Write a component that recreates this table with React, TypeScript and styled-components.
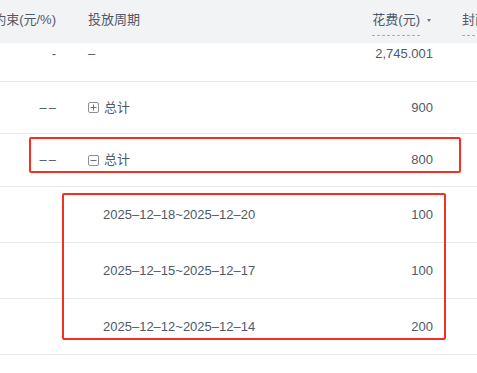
import React from 'react';
import styled, { createGlobalStyle } from 'styled-components';

const GlobalStyle = createGlobalStyle`
  html, body {
    margin: 0;
    padding: 0;
    background: #ffffff;
    overflow: hidden;
  }
  body {
    font-family: "Liberation Sans", "Noto Sans CJK SC", sans-serif;
    font-size: 13px;
    color: #4e5969;
  }
`;

const Page = styled.div`
  position: relative;
  width: 477px;
  height: 373px;
  overflow: hidden;
`;

const Table = styled.div`
  display: flex;
  flex-direction: column;
  width: 649px;
`;

const Row = styled.div<{ $height: number; $head?: boolean; $top?: boolean }>`
  display: grid;
  grid-template-columns: 72px 217px 160px 200px;
  height: ${(p) => p.$height}px;
  box-sizing: border-box;
  align-items: ${(p) => (p.$top ? 'start' : 'center')};
  background: ${(p) => (p.$head ? '#f2f3f5' : '#ffffff')};
  border-bottom: ${(p) => (p.$head ? 'none' : '1px solid #e8e9ed')};
  line-height: 22px;
`;

const Cell = styled.div<{ $align?: 'left' | 'right'; $indent?: number }>`
  display: flex;
  align-items: center;
  justify-content: ${(p) => (p.$align === 'right' ? 'flex-end' : 'flex-start')};
  padding: 0 16px 0 ${(p) => 16 + (p.$indent || 0)}px;
  white-space: nowrap;
  overflow: hidden;
  color: #4e5969;
`;

const HeadCell = styled(Cell)`
  align-self: start;
  padding-top: 9px;
  color: #4e5969;
`;

const Dashed = styled.span`
  border-bottom: 1px dashed #a9aeb8;
  line-height: 22px;
  padding-bottom: 4px;
`;

const Caret = styled.span`
  align-self: flex-start;
  width: 0;
  height: 0;
  margin: 10px 2px 0 7px;
  border-left: 2.5px solid transparent;
  border-right: 2.5px solid transparent;
  border-top: 3px solid #6b7280;
`;

const Dashes = styled.span`
  letter-spacing: 2px;
  margin-right: -2px;
`;

const Toggle = styled.span`
  display: inline-flex;
  align-items: center;
  justify-content: center;
  width: 11px;
  height: 11px;
  margin-right: 5px;
  box-sizing: border-box;
  border: 1px solid #8a8f99;
  border-radius: 2px;
`;

const Mark = styled.svg`
  display: block;
`;

const Highlight = styled.div<{ $x: number; $y: number; $w: number; $h: number }>`
  position: absolute;
  left: ${(p) => p.$x}px;
  top: ${(p) => p.$y}px;
  width: ${(p) => p.$w}px;
  height: ${(p) => p.$h}px;
  box-sizing: border-box;
  border: 2.5px solid #f5301c;
  border-radius: 2px;
  pointer-events: none;
`;

const ToggleIcon = ({ open }: { open: boolean }) => (
  <Toggle>
    <Mark width="7" height="7" viewBox="0 0 7 7">
      <line x1="0.5" y1="3.5" x2="6.5" y2="3.5" stroke="#6b707a" strokeWidth="1" />
      {!open && <line x1="3.5" y1="0.5" x2="3.5" y2="6.5" stroke="#6b707a" strokeWidth="1" />}
    </Mark>
  </Toggle>
);

const periods = [
  { range: '2025–12–18~2025–12–20', cost: '100' },
  { range: '2025–12–15~2025–12–17', cost: '100' },
  { range: '2025–12–12~2025–12–14', cost: '200' },
];

export default function App() {
  return (
    <Page>
      <GlobalStyle />
      <Table>
        <Row $height={43} $head>
          <HeadCell $align="right">出价约束(元/%)</HeadCell>
          <HeadCell>投放周期</HeadCell>
          <HeadCell $align="right">
            <Dashed>花费(元)</Dashed>
            <Caret />
          </HeadCell>
          <HeadCell $indent={-3}>
            <Dashed>封面消耗占比</Dashed>
          </HeadCell>
        </Row>
        <Row $height={39} $top>
          <Cell $align="right">-</Cell>
          <Cell>–</Cell>
          <Cell $align="right">2,745.001</Cell>
          <Cell />
        </Row>
        <Row $height={52}>
          <Cell $align="right"><Dashes>––</Dashes></Cell>
          <Cell><ToggleIcon open={false} />总计</Cell>
          <Cell $align="right">900</Cell>
          <Cell />
        </Row>
        <Row $height={53}>
          <Cell $align="right"><Dashes>––</Dashes></Cell>
          <Cell><ToggleIcon open />总计</Cell>
          <Cell $align="right">800</Cell>
          <Cell />
        </Row>
        {periods.map((p) => (
          <Row $height={56} key={p.range}>
            <Cell />
            <Cell $indent={15}>{p.range}</Cell>
            <Cell $align="right">{p.cost}</Cell>
            <Cell />
          </Row>
        ))}
        <Row $height={56}>
          <Cell />
          <Cell />
          <Cell />
          <Cell />
        </Row>
      </Table>
      <Highlight $x={29} $y={137} $w={432} $h={36} />
      <Highlight $x={62} $y={193} $w={384} $h={147} />
    </Page>
  );
}
